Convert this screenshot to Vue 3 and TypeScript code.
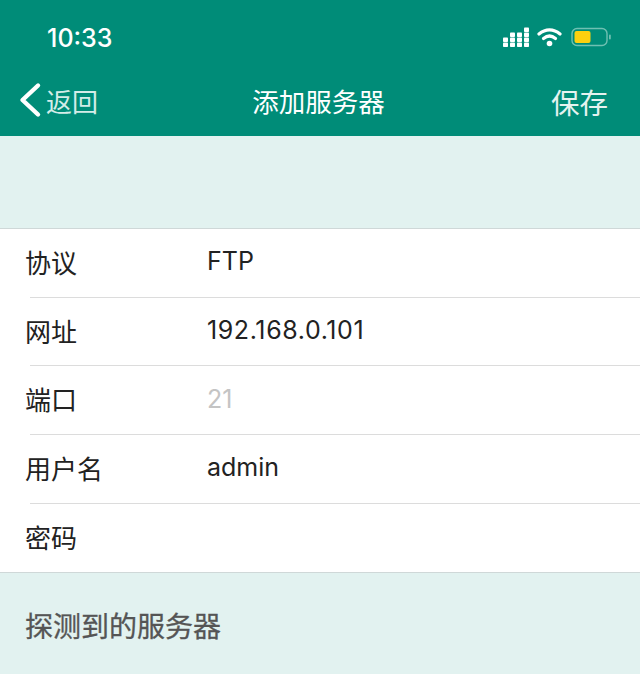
<script setup lang="ts">
interface Field {
  label: string
  value: string
  placeholder?: boolean
  spaced?: boolean
}

const fields: Field[] = [
  { label: '协议', value: 'FTP' },
  { label: '网址', value: '192.168.0.101', spaced: true },
  { label: '端口', value: '21', placeholder: true },
  { label: '用户名', value: 'admin' },
  { label: '密码', value: '' }
]

const signalBars = [
  { x: 0, rows: 2 },
  { x: 7, rows: 3 },
  { x: 14, rows: 3 },
  { x: 21, rows: 4 }
]
</script>

<template>
  <div class="screen">
    <header class="head">
      <div class="status">
        <span class="time">10:33</span>
        <div class="status-icons">
          <svg class="signal" width="26" height="20" viewBox="0 0 26 20" fill="#fff">
            <template v-for="bar in signalBars" :key="bar.x">
              <rect v-for="r in bar.rows" :key="r" :x="bar.x" :y="20 - r * 5 + 0.6" width="5" height="4.4" rx="0.8" />
            </template>
          </svg>
          <svg class="wifi" width="25" height="20" viewBox="0 0 25 20">
            <path d="M2 7C8.500 1.500 16.500 1.500 23 7" fill="none" stroke="#fff" stroke-width="3.2" stroke-linecap="round" />
            <path d="M6.500 11.500C10.300 8.300 14.700 8.300 18.500 11.500" fill="none" stroke="#fff" stroke-width="3.2" stroke-linecap="round" />
            <circle cx="12.500" cy="16.500" r="2.800" fill="#fff" />
          </svg>
          <svg width="40" height="20" viewBox="0 0 40 20">
            <rect x="1" y="1.500" width="35" height="17" rx="5" fill="none" stroke="#6fc0b2" stroke-width="1.4" />
            <rect x="3.500" y="4" width="16" height="12" rx="2" fill="#fdd00f" />
            <rect x="38" y="7.500" width="1.800" height="5" rx="0.900" fill="#6fc0b2" />
          </svg>
        </div>
      </div>
      <nav class="nav">
        <div class="back">
          <svg width="24" height="36" viewBox="0 0 24 36">
            <path d="M20 3.500 4.500 18 20 32.500" fill="none" stroke="#fff" stroke-width="4.4" stroke-linecap="round" stroke-linejoin="round" />
          </svg>
          <span>返回</span>
        </div>
        <div class="title">添加服务器</div>
        <div class="save">保存</div>
      </nav>
    </header>

    <div class="spacer"></div>

    <section class="form">
      <div v-for="f in fields" :key="f.label" class="row">
        <span class="label">{{ f.label }}</span>
        <span class="value" :class="{ muted: f.placeholder, spaced: f.spaced }">{{ f.value }}</span>
      </div>
    </section>

    <div class="section-title">探测到的服务器</div>
  </div>
</template>

<style scoped>
.screen {
  width: 640px;
  height: 674px;
  overflow: hidden;
  background: #e2f2f0;
  font-family: "Liberation Sans", "Noto Sans CJK SC", sans-serif;
  color: #222;
}

.head {
  height: 136px;
  background: #008c78;
  color: #fff;
}

.status {
  height: 68px;
  padding: 8px 29px 0 47px;
  display: flex;
  align-items: center;
  justify-content: space-between;
  box-sizing: border-box;
}

.time {
  font-family: Inter, "Liberation Sans", sans-serif;
  font-size: 25px;
  font-weight: 500;
}

.status-icons {
  display: flex;
  align-items: center;
  gap: 8px;
  margin-top: -2px;
}

.wifi {
  margin-right: 1px;
}

.nav {
  height: 68px;
  padding: 0 32px 4px 18px;
  box-sizing: border-box;
  display: flex;
  align-items: center;
  justify-content: space-between;
}

.back {
  display: flex;
  align-items: center;
  gap: 4px;
  font-size: 26px;
  width: 120px;
  color: #d4ece8;
}

.title {
  font-size: 26.5px;
  margin-left: 11px;
}

.save {
  width: 120px;
  margin-top: 2px;
  text-align: right;
  font-size: 28.5px;
  color: #e4f3f0;
}

.spacer {
  height: 92px;
}

.form {
  background: #fff;
  border-top: 1px solid #cfd8d8;
  border-bottom: 1px solid #cfd8d8;
}

.row {
  height: 68.7px;
  margin-left: 30px;
  display: flex;
  align-items: center;
  border-bottom: 1px solid #dcdcdc;
  box-sizing: border-box;
  font-size: 26px;
}

.row:last-child {
  border-bottom: none;
}

.label {
  width: 177px;
  margin-left: -5px;
  margin-top: -3px;
  flex-shrink: 0;
}

.value {
  font-family: Inter, "Liberation Sans", sans-serif;
  font-size: 25px;
  padding-left: 5px;
  margin-top: -3px;
}

.spaced {
  letter-spacing: 0.6px;
}

.muted {
  color: #c4c4c4;
}

.section-title {
  padding: 32px 25px 0;
  font-size: 28px;
  color: #555;
  -webkit-text-stroke: 0.3px #555;
}
</style>
